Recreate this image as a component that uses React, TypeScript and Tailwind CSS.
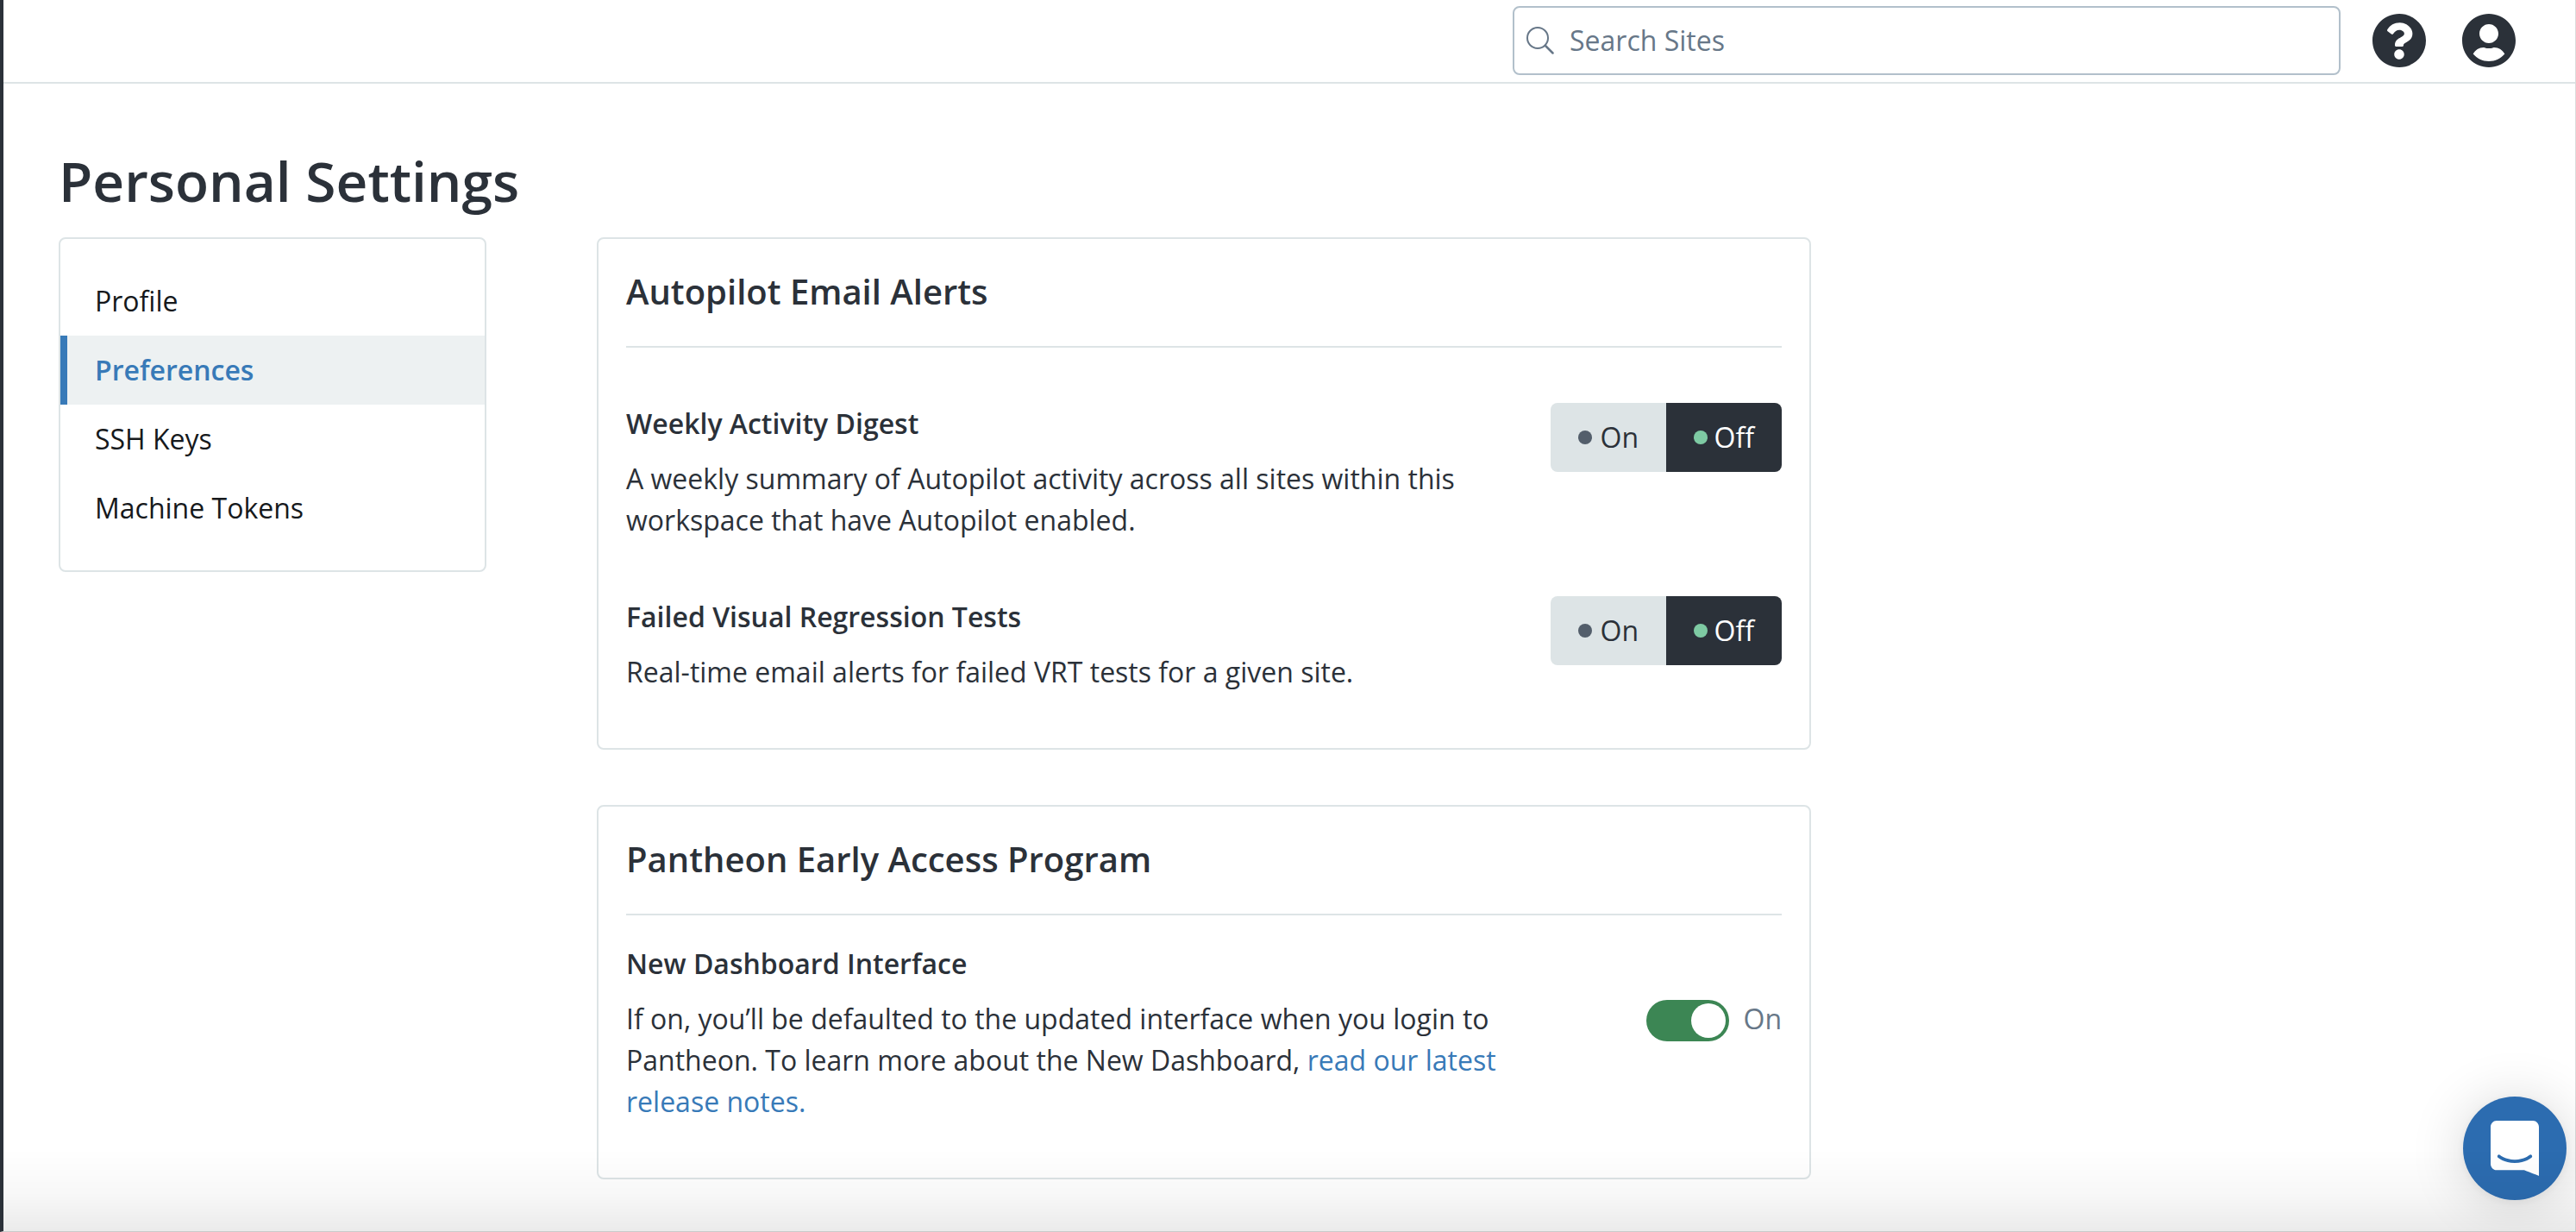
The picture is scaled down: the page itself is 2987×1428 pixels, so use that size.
import { useState, type ReactNode } from "react";
import { FaQuestionCircle, FaUserCircle } from "react-icons/fa";

const navItems = ["Profile", "Preferences", "SSH Keys", "Machine Tokens"];

function SearchIcon() {
  return (
    <svg viewBox="0 0 32 32" className="h-8 w-8" fill="none" stroke="currentColor" aria-hidden="true">
      <circle cx="13" cy="13" r="12" strokeWidth="2" />
      <path d="M22 22L30.500 30.500" strokeWidth="2.500" strokeLinecap="round" />
    </svg>
  );
}

function Header() {
  return (
    <header className="flex items-center justify-end border-b-2 border-[#dde4e6] pt-[7px] pr-[68px] pb-2">
      <div className="relative mr-9 w-full max-w-[960px]">
        <label htmlFor="site-search" aria-label="Search Sites" className="absolute top-6 left-4 text-[#677788]">
          <SearchIcon />
        </label>
        <input
          id="site-search"
          type="search"
          placeholder="Search Sites"
          className="block h-20 w-full rounded-lg border-2 border-[#b2c0cb] bg-white pr-4 pb-0.5 pl-16 text-[32px] placeholder:text-[#677788]"
        />
      </div>
      <div className="flex gap-10">
        <button type="button" aria-label="Help">
          <FaQuestionCircle className="size-16" />
        </button>
        <button type="button" aria-label="Account">
          <FaUserCircle className="size-16" />
        </button>
      </div>
    </header>
  );
}

function SideNav() {
  return (
    <nav aria-label="Personal settings" className="w-[496px] shrink-0 self-start rounded-lg border-2 border-[#dde4e6] py-8">
      <ul>
        {navItems.map((item) => (
          <li key={item}>
            <a
              href="#"
              aria-current={item === "Preferences" ? "page" : undefined}
              className={
                item === "Preferences"
                  ? "block border-l-8 border-[#387ab8] bg-[#edf1f2] py-4 pl-8 font-semibold text-[#387ab8]"
                  : "block border-l-8 border-transparent py-4 pl-8 text-[#16191c]"
              }
            >
              {item}
            </a>
          </li>
        ))}
      </ul>
    </nav>
  );
}

function Card({ title, children }: { title: string; children: ReactNode }) {
  return (
    <section className="rounded-lg border-2 border-[#dde4e6] px-8 pt-8">
      <h2 className="border-b-2 border-[#dde4e6] pb-[34px] text-[40px] leading-[58px] font-semibold">{title}</h2>
      {children}
    </section>
  );
}

function Setting({ title, children, control }: { title: string; children: ReactNode; control: ReactNode }) {
  return (
    <div className="flex justify-between pb-16">
      <div className="max-w-[1040px]">
        <h3 className="mb-4 font-semibold">{title}</h3>
        <p>{children}</p>
      </div>
      {control}
    </div>
  );
}

function OnOff({ label }: { label: string }) {
  const [value, setValue] = useState("Off");
  return (
    <div role="group" aria-label={label} className="flex h-20 w-[268px] shrink-0 overflow-hidden rounded-lg">
      {["On", "Off"].map((option) => (
        <button
          key={option}
          type="button"
          aria-pressed={value === option}
          onClick={() => setValue(option)}
          className={
            value === option
              ? "flex flex-1 items-center justify-between bg-[#2b3139] px-8 text-white"
              : "flex flex-1 items-center justify-between bg-[#dde4e6] px-8"
          }
        >
          <span className={value === option ? "size-4 rounded-full bg-[#7ecaa3]" : "size-4 rounded-full bg-[#535e6b]"} />
          {option}
        </button>
      ))}
    </div>
  );
}

function Switch({ label }: { label: string }) {
  const [on, setOn] = useState(true);
  return (
    <div className="flex shrink-0 gap-4 pt-16 text-[#677788]">
      <button
        type="button"
        role="switch"
        aria-checked={on}
        aria-label={label}
        onClick={() => setOn(!on)}
        className={
          on
            ? "mt-0.5 flex h-12 w-24 justify-end rounded-full bg-[#3c8654] p-1"
            : "mt-0.5 flex h-12 w-24 justify-start rounded-full bg-[#677788] p-1"
        }
      >
        <span className="size-10 rounded-full bg-white" />
      </button>
      <span>{on ? "On" : "Off"}</span>
    </div>
  );
}

function ChatLauncher() {
  return (
    <button
      type="button"
      aria-label="Open chat"
      className="fixed right-[11px] bottom-[37px] flex size-[120px] items-center justify-center rounded-full bg-[#2c6cb0] text-white shadow-[0_2px_12px_rgba(0,0,0,0.06),0_4px_64px_rgba(0,0,0,0.16)]"
    >
      <svg viewBox="0 0 28 32" className="h-16 w-14" fill="currentColor" aria-hidden="true">
        <path d="M28 32s-4.714-1.855-8.527-3.340H3.437C1.540 28.660 0 27.026 0 25.013V3.644C0 1.633 1.540 0 3.437 0h21.125c1.898 0 3.437 1.632 3.437 3.645v18.404H28V32zm-4.139-11.982a.88.88 0 00-1.292-.105c-.03.026-3.015 2.681-8.570 2.681-5.486 0-8.517-2.636-8.571-2.684a.88.88 0 00-1.290.107 1.010 1.010 0 00-.219.708.992.992 0 00.318.664c.142.128 3.537 3.150 9.762 3.150 6.226 0 9.621-3.022 9.763-3.150a.992.992 0 00.317-.664 1.010 1.010 0 00-.218-.707z" />
      </svg>
    </button>
  );
}

export default function App() {
  return (
    <div className="min-h-screen border-r border-b border-l-4 border-r-[#dcdcdc] border-b-[#dcdcdc] border-l-[#2b3139] bg-white font-['Open_Sans',sans-serif] text-[32px] leading-[48px] text-[#2b3139]">
      <Header />
      <main className="px-16 pt-16">
        <h1 className="mb-4 text-[64px] leading-[98px] font-semibold">Personal Settings</h1>
        <div className="flex gap-32">
          <SideNav />
          <div className="flex w-full max-w-[1408px] flex-col gap-16">
            <Card title="Autopilot Email Alerts">
              <div className="pt-16">
                <Setting title="Weekly Activity Digest" control={<OnOff label="Weekly Activity Digest" />}>
                  A weekly summary of Autopilot activity across all sites within this workspace that have Autopilot
                  enabled.
                </Setting>
                <Setting title="Failed Visual Regression Tests" control={<OnOff label="Failed Visual Regression Tests" />}>
                  Real-time email alerts for failed VRT tests for a given site.
                </Setting>
              </div>
            </Card>
            <Card title="Pantheon Early Access Program">
              <div className="pt-8">
                <Setting title="New Dashboard Interface" control={<Switch label="New Dashboard Interface" />}>
                  If on, you’ll be defaulted to the updated interface when you login to Pantheon. To learn more about the
                  New Dashboard,{" "}
                  <a href="#" className="text-[#387ab8]">
                    read our latest release notes.
                  </a>
                </Setting>
              </div>
            </Card>
          </div>
        </div>
      </main>
      <ChatLauncher />
      <div className="pointer-events-none fixed right-0 bottom-0 left-1 h-24 bg-linear-to-t from-black/8 via-black/3 via-45% to-transparent" />
    </div>
  );
}
